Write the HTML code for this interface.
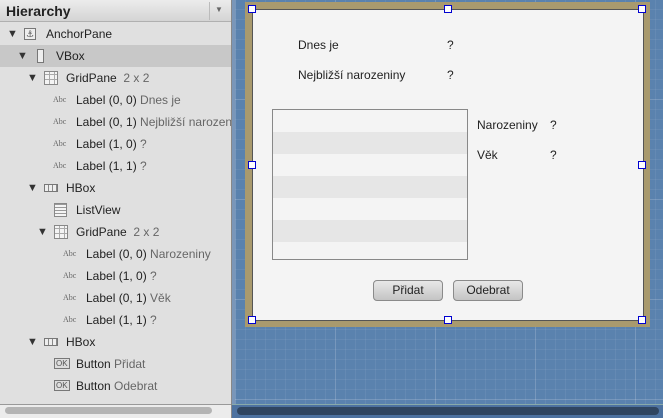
<!DOCTYPE html>
<html><head><meta charset="utf-8"><style>
*{margin:0;padding:0;box-sizing:border-box}
body{width:663px;height:418px;overflow:hidden;position:relative;font-family:"Liberation Sans","DejaVu Sans",sans-serif;font-size:12px;color:#222;background:#e0e0e0}
.a{position:absolute}
.row{position:absolute;left:0;width:231px;height:22px;line-height:22px;white-space:nowrap;overflow:hidden}
.row span{position:absolute}
.tri{font-size:11px;color:#333}
.g{color:#666}
.abc{font-family:"Liberation Serif",serif;font-size:8px;color:#666}
.ok{font-size:8px;border:1px solid #777;background:#ddd;color:#555;line-height:9px;height:11px;top:5px;padding:0 1px}
.lbl{position:absolute;font-size:12px;color:#222}
.btn{position:absolute;height:21px;width:70px;border:1px solid #8a8a8a;border-radius:4px;background:linear-gradient(#e8e8e8,#c4c4c4);text-align:center;line-height:19px;font-size:12px;color:#222}
.h{position:absolute;width:8px;height:8px;border:1px solid #0000d0;background:#fff}
</style></head><body>
<div class="a" style="left:0;top:0;width:231px;height:22px;background:linear-gradient(#ececec,#d4d4d4);border-bottom:1px solid #b0b0b0"></div>
<div class="a" style="left:6px;top:3px;font-weight:bold;font-size:14px;color:#222">Hierarchy</div>
<div class="a" style="left:209px;top:2px;width:1px;height:18px;background:#bbb"></div>
<div class="a" style="left:215px;top:5px;font-size:8px;color:#666">▼</div>
<div class="a" style="left:0;top:45px;width:231px;height:22px;background:#c8c8c8"></div>

<div class="row" style="top:23px"><span class="tri" style="left:7px">▼</span><span style="left:24px;top:5px;width:12px;height:12px;border:1px solid #777;background:#eee;font-size:9px;line-height:10px;text-align:center;color:#555">⚓</span><span style="left:46px">AnchorPane</span></div>
<div class="row" style="top:45px"><span class="tri" style="left:17px">▼</span><span style="left:37px;top:4px;width:7px;height:14px;border:1px solid #777;background:#eee"></span><span style="left:56px">VBox</span></div>
<div class="row" style="top:67px"><span class="tri" style="left:27px">▼</span><span style="left:44px;top:4px;width:14px;height:14px;border:1px solid #888;background:repeating-linear-gradient(90deg,transparent 0 4px,#aaa 4px 5px),repeating-linear-gradient(0deg,#f4f4f4 0 4px,#aaa 4px 5px)"></span><span style="left:66px">GridPane <span class="g" style="position:static">&nbsp;2 x 2</span></span></div>
<div class="row" style="top:89px"><span class="abc" style="left:53px">Abc</span><span style="left:76px">Label (0, 0) <span class="g" style="position:static">Dnes je</span></span></div>
<div class="row" style="top:111px"><span class="abc" style="left:53px">Abc</span><span style="left:76px">Label (0, 1) <span class="g" style="position:static">Nejbližší narozeniny</span></span></div>
<div class="row" style="top:133px"><span class="abc" style="left:53px">Abc</span><span style="left:76px">Label (1, 0) <span class="g" style="position:static">?</span></span></div>
<div class="row" style="top:155px"><span class="abc" style="left:53px">Abc</span><span style="left:76px">Label (1, 1) <span class="g" style="position:static">?</span></span></div>
<div class="row" style="top:177px"><span class="tri" style="left:27px">▼</span><span style="left:44px;top:7px;width:14px;height:8px;border:1px solid #777;background:repeating-linear-gradient(90deg,#eee 0 3px,#888 3px 4px)"></span><span style="left:66px">HBox</span></div>
<div class="row" style="top:199px"><span style="left:54px;top:4px;width:13px;height:14px;border:1px solid #888;background:repeating-linear-gradient(0deg,#f4f4f4 0 2px,#999 2px 3px)"></span><span style="left:76px">ListView</span></div>
<div class="row" style="top:221px"><span class="tri" style="left:37px">▼</span><span style="left:54px;top:4px;width:14px;height:14px;border:1px solid #888;background:repeating-linear-gradient(90deg,transparent 0 4px,#aaa 4px 5px),repeating-linear-gradient(0deg,#f4f4f4 0 4px,#aaa 4px 5px)"></span><span style="left:76px">GridPane <span class="g" style="position:static">&nbsp;2 x 2</span></span></div>
<div class="row" style="top:243px"><span class="abc" style="left:63px">Abc</span><span style="left:86px">Label (0, 0) <span class="g" style="position:static">Narozeniny</span></span></div>
<div class="row" style="top:265px"><span class="abc" style="left:63px">Abc</span><span style="left:86px">Label (1, 0) <span class="g" style="position:static">?</span></span></div>
<div class="row" style="top:287px"><span class="abc" style="left:63px">Abc</span><span style="left:86px">Label (0, 1) <span class="g" style="position:static">Věk</span></span></div>
<div class="row" style="top:309px"><span class="abc" style="left:63px">Abc</span><span style="left:86px">Label (1, 1) <span class="g" style="position:static">?</span></span></div>
<div class="row" style="top:331px"><span class="tri" style="left:27px">▼</span><span style="left:44px;top:7px;width:14px;height:8px;border:1px solid #777;background:repeating-linear-gradient(90deg,#eee 0 3px,#888 3px 4px)"></span><span style="left:66px">HBox</span></div>
<div class="row" style="top:353px"><span class="ok" style="left:54px">OK</span><span style="left:76px">Button <span class="g" style="position:static">Přidat</span></span></div>
<div class="row" style="top:375px"><span class="ok" style="left:54px">OK</span><span style="left:76px">Button <span class="g" style="position:static">Odebrat</span></span></div>

<div class="a" style="left:0;top:404px;width:232px;height:14px;background:#ececec;border-top:1px solid #999"></div>
<div class="a" style="left:5px;top:407px;width:207px;height:7px;border-radius:4px;background:#b4b4b4"></div>
<div class="a" style="left:231px;top:0;width:1px;height:418px;background:#888"></div>

<div class="a" style="left:232px;top:0;width:431px;height:404px;background-color:#5a82ae;background-image:linear-gradient(90deg,rgba(255,255,255,.12) 1px,transparent 1px),linear-gradient(0deg,rgba(255,255,255,.12) 1px,transparent 1px),linear-gradient(90deg,rgba(255,255,255,.06) 1px,transparent 1px),linear-gradient(0deg,rgba(255,255,255,.06) 1px,transparent 1px);background-size:100px 100px,100px 100px,10px 10px,10px 10px;border-left:3px solid #7a96b8"></div>
<div class="a" style="left:232px;top:404px;width:431px;height:14px;background:#4d72a0;border-top:1px solid #8aa"></div>
<div class="a" style="left:237px;top:407px;width:422px;height:8px;border-radius:4px;background:#2f4560"></div>

<div class="a" style="left:245px;top:2px;width:405px;height:325px;background:#a99a6e"></div>
<div class="a" style="left:252px;top:9px;width:392px;height:312px;background:#f4f4f4;border:1px solid #555"></div>

<div class="lbl" style="left:298px;top:38px">Dnes je</div>
<div class="lbl" style="left:447px;top:38px">?</div>
<div class="lbl" style="left:298px;top:68px">Nejbližší narozeniny</div>
<div class="lbl" style="left:447px;top:68px">?</div>

<div class="a" style="left:272px;top:109px;width:196px;height:151px;border:1px solid #888;background:#f4f4f4;overflow:hidden">
<div class="a" style="left:0;top:22px;width:194px;height:22px;background:#e6e6e6"></div>
<div class="a" style="left:0;top:66px;width:194px;height:22px;background:#e6e6e6"></div>
<div class="a" style="left:0;top:110px;width:194px;height:22px;background:#e6e6e6"></div>
</div>
<div class="lbl" style="left:477px;top:118px">Narozeniny</div>
<div class="lbl" style="left:550px;top:118px">?</div>
<div class="lbl" style="left:477px;top:148px">Věk</div>
<div class="lbl" style="left:550px;top:148px">?</div>

<div class="btn" style="left:373px;top:280px">Přidat</div>
<div class="btn" style="left:453px;top:280px">Odebrat</div>

<div class="h" style="left:248px;top:5px"></div>
<div class="h" style="left:444px;top:5px"></div>
<div class="h" style="left:638px;top:5px"></div>
<div class="h" style="left:248px;top:161px"></div>
<div class="h" style="left:638px;top:161px"></div>
<div class="h" style="left:248px;top:316px"></div>
<div class="h" style="left:444px;top:316px"></div>
<div class="h" style="left:638px;top:316px"></div>
</body></html>
